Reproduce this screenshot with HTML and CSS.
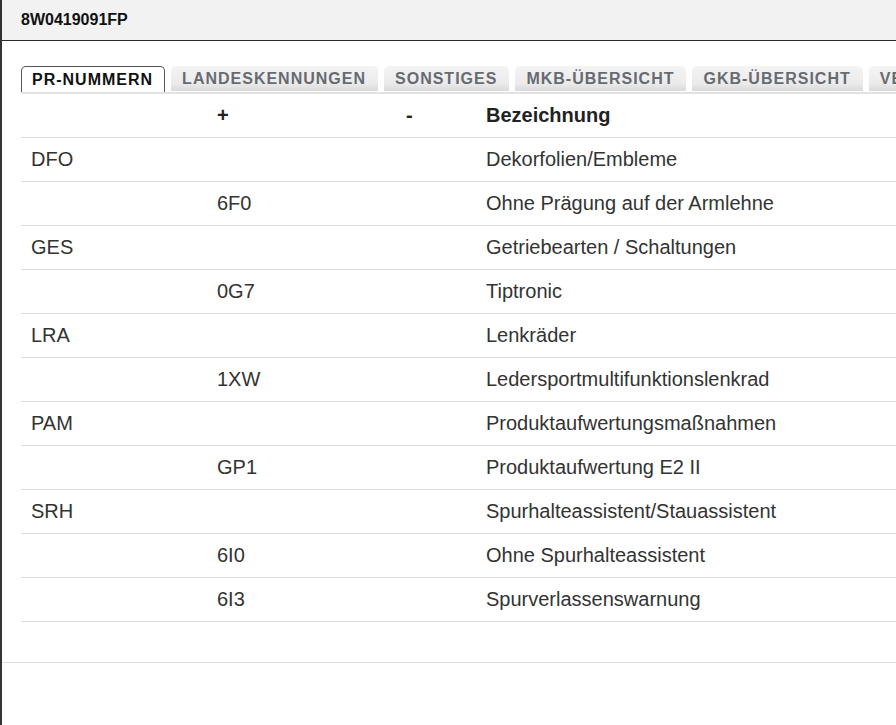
FILE: index.html
```html
<!DOCTYPE html>
<html lang="de">
<head>
    <meta charset="UTF-8">
    <meta name="viewport" content="width=device-width, initial-scale=1.0">
    <title>8W0419091FP</title>
    <link rel="stylesheet" href="styles.css">
</head>
<body>

<div id="dialog">
    <div class="dialog-header">8W0419091FP</div>

    <div class="dialog-body">
        <ul class="tabs">
            <li class="tab active">PR-NUMMERN</li>
            <li class="tab">LANDESKENNUNGEN</li>
            <li class="tab">SONSTIGES</li>
            <li class="tab">MKB-ÜBERSICHT</li>
            <li class="tab">GKB-ÜBERSICHT</li>
            <li class="tab">VERBAUTE TEILE</li>
        </ul>

        <table class="pr-table">
            <thead>
                <tr>
                    <th class="col-family"></th>
                    <th class="col-plus">+</th>
                    <th class="col-minus">-</th>
                    <th class="col-name">Bezeichnung</th>
                </tr>
            </thead>
            <tbody>
                <tr><td>DFO</td><td></td><td></td><td>Dekorfolien/Embleme</td></tr>
                <tr><td></td><td>6F0</td><td></td><td>Ohne Prägung auf der Armlehne</td></tr>
                <tr><td>GES</td><td></td><td></td><td>Getriebearten / Schaltungen</td></tr>
                <tr><td></td><td>0G7</td><td></td><td>Tiptronic</td></tr>
                <tr><td>LRA</td><td></td><td></td><td>Lenkräder</td></tr>
                <tr><td></td><td>1XW</td><td></td><td>Ledersportmultifunktionslenkrad</td></tr>
                <tr><td>PAM</td><td></td><td></td><td>Produktaufwertungsmaßnahmen</td></tr>
                <tr><td></td><td>GP1</td><td></td><td>Produktaufwertung E2 II</td></tr>
                <tr><td>SRH</td><td></td><td></td><td>Spurhalteassistent/Stauassistent</td></tr>
                <tr><td></td><td>6I0</td><td></td><td>Ohne Spurhalteassistent</td></tr>
                <tr><td></td><td>6I3</td><td></td><td>Spurverlassenswarnung</td></tr>
            </tbody>
        </table>
    </div>

    <div class="dialog-footer"></div>
</div>

</body>
</html>
```

FILE: styles.css
```css
html, body {
    margin: 0;
    height: 100%;
    overflow: hidden;
}

body {
    font-family: "Liberation Sans", Arial, sans-serif;
    color: #333;
    background: #fff;
}

#dialog {
    height: 100%;
    border-left: 2px solid #333;
    display: flex;
    flex-direction: column;
}

.dialog-header {
    height: 40px;
    line-height: 39px;
    padding-left: 19px;
    background-color: #f2f2f2;
    border-bottom: 1px solid #2b2b2b;
    font-size: 16px;
    font-weight: bold;
    color: #111;
}

.dialog-body {
    padding: 25px 0 0 19px;
    height: 596px;
    overflow: hidden;
}

.tabs {
    list-style: none;
    margin: 0;
    padding: 0;
    display: flex;
    gap: 6px;
    white-space: nowrap;
    border-bottom: 2px solid #e2e2e2;
    width: 1100px;
}

.tab {
    flex: none;
    height: 25px;
    line-height: 25px;
    padding: 0 12px 0 11px;
    font-size: 16px;
    font-weight: bold;
    letter-spacing: 1px;
    color: #676b71;
    border-radius: 5px 5px 0 0;
    background: linear-gradient(#f4f4f4, #ebebeb 70%, #d9d9d9);
}

.tab.active {
    color: #111;
    background: #fff;
    border: 1px solid #555;
    border-bottom: none;
    padding: 0 11px 0 10px;
}

.pr-table {
    border-collapse: collapse;
    width: 1000px;
    table-layout: fixed;
    font-size: 20px;
}

.pr-table th,
.pr-table td {
    text-align: left;
    padding: 8px 10px;
    line-height: 27px;
    border-bottom: 1px solid #ddd;
    white-space: nowrap;
}

.pr-table th {
    font-weight: bold;
    color: #222;
}

.col-family { width: 166px; }
.col-plus { width: 169px; }
.col-minus { width: 60px; }

.dialog-footer {
    flex: 1;
    border-top: 1px solid #ddd;
}
```
